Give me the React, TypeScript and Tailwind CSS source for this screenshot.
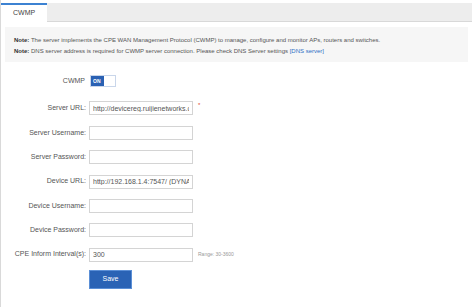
import React from 'react';

const rows = [
  { label: 'Server URL:', value: 'http://devicereg.ruijienetworks.com', required: true },
  { label: 'Server Username:', value: '' },
  { label: 'Server Password:', value: '' },
  { label: 'Device URL:', value: 'http://192.168.1.4:7547/ (DYNAMIC)' },
  { label: 'Device Username:', value: '' },
  { label: 'Device Password:', value: '' },
  { label: 'CPE Inform Interval(s):', value: '300', hint: 'Range: 30-3600' },
];

export default function App() {
  return (
    <div
      className="w-[472px] h-[307px] bg-white border-l border-[#d9d9d9] text-[#555] overflow-hidden"
      style={{ fontFamily: '"Liberation Sans", Arial, sans-serif' }}
    >
      {/* Tabs */}
      <div className="mt-[3px] h-[19px] flex bg-[#ededed] border-b border-[#d8d8d8]">
        <div className="w-[46px] h-[19px] bg-white border-t-2 border-[#3c82d2] pl-[12px] text-[7px] leading-[16px] text-[#444]">
          CWMP
        </div>
      </div>

      {/* Notes */}
      <div className="mx-[4px] mt-[5px] h-[35px] bg-[#f6f6f6] px-[9px] pt-[8px] text-[6px] leading-[11px] text-[#555]">
        <div>
          <span className="font-bold text-[#333]">Note:</span> The server implements the CPE WAN Management Protocol (CWMP) to
          manage, configure and monitor APs, routers and switches.
        </div>
        <div>
          <span className="font-bold text-[#333]">Note:</span> DNS server address is required for CWMP server connection. Please
          check DNS Server settings <span className="text-[#2d6fc4]">[DNS server]</span>
        </div>
      </div>

      {/* Form */}
      <div className="mt-[13px] flex flex-col gap-[10.4px] text-[7px]">
        <div className="flex items-center h-[12px] mb-[4px]">
          <div className="w-[85px] text-right pr-[1px]">CWMP</div>
          <div className="ml-[4px] w-[26px] h-[12px] flex border border-[#c9d6ea] bg-white">
            <div className="w-[13px] bg-[#2a61b3] text-white font-bold text-[5px] leading-[10px] pl-[2px]">ON</div>
          </div>
        </div>
        {rows.map((r) => (
          <div key={r.label} className="flex items-center h-[14px]">
            <div className="w-[85px] text-right whitespace-nowrap">{r.label}</div>
            <input
              readOnly
              value={r.value}
              className="ml-[3px] w-[104px] h-[14px] border border-[#d4d4d4] bg-white px-[3px] text-[7px] text-[#555] outline-none"
            />
            {r.required && <span className="ml-[5px] text-[#e0442a] text-[6px] -mt-[5px]">*</span>}
            {r.hint && <span className="ml-[5px] text-[5px] text-[#999]">{r.hint}</span>}
          </div>
        ))}
        <div className="pl-[88px] -mt-[2.4px]">
          <button className="w-[43px] h-[19px] bg-[#2a63b5] border border-[#5b8fd6] text-white text-[7px]">
            Save
          </button>
        </div>
      </div>
    </div>
  );
}
